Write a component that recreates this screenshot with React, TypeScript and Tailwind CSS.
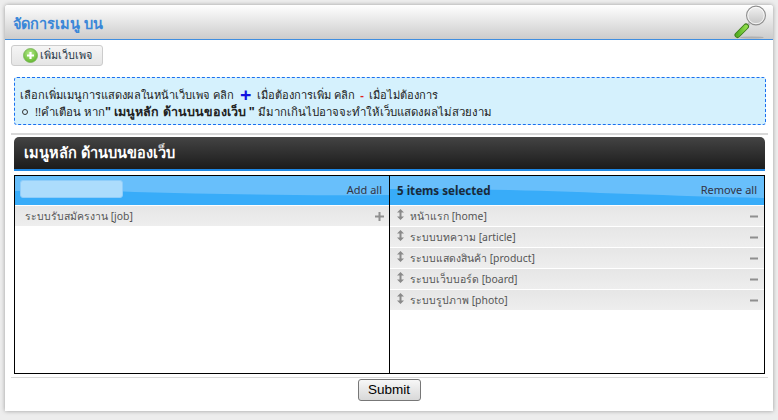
function PlusIcon() {
  return (
    <svg width="15" height="15" viewBox="0 0 15 15" className="shrink-0">
      <defs>
        <radialGradient id="pg" cx="45%" cy="35%" r="70%">
          <stop offset="0%" stopColor="#b5ea8c" />
          <stop offset="100%" stopColor="#5cb327" />
        </radialGradient>
      </defs>
      <circle cx="7.5" cy="7.5" r="7" fill="url(#pg)" stroke="#79b25a" strokeWidth="0.8" />
      <path d="M7.5 4v7M4 7.500h7" stroke="#fff" strokeWidth="2.2" />
    </svg>
  );
}

function Magnifier() {
  return (
    <svg width="34" height="34" viewBox="0 0 34 34">
      <defs>
        <linearGradient id="mg" x1="0" y1="0" x2="0" y2="1">
          <stop offset="0%" stopColor="#f2f2f2" />
          <stop offset="100%" stopColor="#c4c4c4" />
        </linearGradient>
        <linearGradient id="hg" x1="0" y1="0" x2="1" y2="0">
          <stop offset="0%" stopColor="#55b024" />
          <stop offset="100%" stopColor="#8fdc4a" />
        </linearGradient>
      </defs>
      <ellipse cx="18" cy="32.500" rx="12" ry="1" fill="#8f8f8f" opacity="0.5" />
      <path d="M15.500 18.500l-3 3" stroke="#b5b5b5" strokeWidth="2.500" />
      <path d="M3.500 30 12 21.500" stroke="#3d7d1a" strokeWidth="6" strokeLinecap="round" />
      <path d="M3.500 30 12 21.500" stroke="url(#hg)" strokeWidth="4" strokeLinecap="round" />
      <circle cx="22" cy="10.500" r="9.400" fill="url(#mg)" stroke="#8f8f8f" strokeWidth="1.200" />
      <circle cx="22" cy="10.500" r="8.200" fill="none" stroke="#fff" strokeWidth="1" opacity="0.8" />
    </svg>
  );
}

function Row({ label, icon, handle }: { label: string; icon: "+" | "-"; handle?: boolean }) {
  return (
    <div className="h-[21px] bg-gradient-to-b from-[#e6e6e6] to-[#eeeeee] flex items-center pr-[5px] text-[10.4px] text-[#555555] border-b border-white">
      {handle ? (
        <svg width="7" height="11" viewBox="0 0 7 11" className="ml-[7px] mr-[6px] mb-[3px] shrink-0">
          <path d="M3.500 0 7 3.500H0zM3.500 11 0 7.500h7z" fill="#8a8a8a" />
          <rect x="2.500" y="3" width="2" height="5" fill="#8a8a8a" />
        </svg>
      ) : (
        <span className="w-[10px] shrink-0" />
      )}
      <span className="flex-1 truncate pt-[1px]">{label}</span>
      <svg width="9" height="9" viewBox="0 0 9 9" className="shrink-0">
        {icon === "+" ? <path d="M4.500 0v9M0 4.500h9" stroke="#8f8f8f" strokeWidth="2" /> : <path d="M0 4.500h8" stroke="#8f8f8f" strokeWidth="2" />}
      </svg>
    </div>
  );
}

function Swoosh({ d }: { d: string }) {
  return (
    <svg viewBox="0 0 375 29" preserveAspectRatio="none" className="absolute inset-0 w-full h-full">
      <path d={d} fill="#68bffb" />
    </svg>
  );
}

export default function App() {
  const selected = ["หน้าแรก [home]", "ระบบบทความ [article]", "ระบบแสดงสินค้า [product]", "ระบบเว็บบอร์ด [board]", "ระบบรูปภาพ [photo]"];
  return (
    <div className="w-[778px] h-[420px] overflow-hidden bg-[#ededed] pt-[5px] pl-[5px] font-['Tahoma','Noto_Sans','DejaVu_Sans',sans-serif] text-[12px] text-[#222222]">
      <div className="w-[768px] h-[406px] bg-white rounded-t-[3px] shadow-[0_0_4px_rgba(0,0,0,0.35)] flex flex-col">
        <div className="h-[35px] shrink-0 bg-gradient-to-b from-white to-[#cccccc] border-b border-[#3f8ee0] flex items-center justify-between pl-[8px] pr-[5px] rounded-t-[3px]">
          <span className="text-[14.5px] font-bold text-[#3a87d8] pt-[4px]">จัดการเมนู บน</span>
          <Magnifier />
        </div>
        <div className="pl-[6px] pt-[5px]">
          <button className="w-[92px] h-[21px] bg-gradient-to-b from-[#f5f5f5] to-[#e5e5e5] border border-[#cccccc] rounded-[3px] flex items-center pl-[11px] gap-[2px] text-[10.8px] text-[#223344]">
            <PlusIcon />
            <span>เพิ่มเว็บเพจ</span>
          </button>
        </div>
        <div className="ml-[9px] mt-[11px] h-[48px] bg-[#d5f1fd] border border-dashed border-[#1a6ff0] rounded-[3px] px-[5px] pt-[8px] leading-[17px] text-[#222222] w-[752px]">
          <div className="flex items-center text-[11.1px]">
            <span>เลือกเพิ่มเมนูการแสดงผลในหน้าเว็บเพจ คลิก</span>
            <span className="ml-[6px] mr-[6px] text-[#1212e0] text-[20px] leading-[17px] font-bold">+</span>
            <span>เมื่อต้องการเพิ่ม คลิก</span>
            <span className="mx-[5px] text-[#e02020] font-bold">-</span>
            <span>เมื่อไม่ต้องการ</span>
          </div>
          <div className="flex items-center text-[11.4px]">
            <span className="w-[6px] h-[6px] rounded-full border border-[#333333] ml-[2px] mr-[7px]" />
            <span>!!คำเตือน หาก<b className="text-[12.5px]">" เมนูหลัก ด้านบนของเว็บ "</b> มีมากเกินไปอาจจะทำให้เว็บแสดงผลไม่สวยงาม</span>
          </div>
        </div>
        <div className="ml-[6px] mt-[8px] h-[2px] bg-[#d8d8d8] w-[757px]" />
        <div className="ml-[9px] mt-[2px] w-[751px] h-[34px] bg-gradient-to-b from-[#444444] to-[#1c1c1c] border-b-[2px] border-[#1e88e5] rounded-t-[5px] flex items-center pl-[10px] text-[14.5px] font-bold text-white">
          เมนูหลัก ด้านบนของเว็บ
        </div>
        <div className="ml-[9px] mt-[4px] w-[751px] h-[199px] border border-black grid grid-cols-[375px_1fr]">
          <div className="border-r border-black">
            <div className="relative h-[30px] bg-[#38acf9] border-b border-white flex items-center justify-end pr-[7px] text-[11px] text-[#333344]">
              <Swoosh d="M0 0H375V19C280 20 200 18 120 16C70 14 30 14 0 15Z" />
              <div className="absolute left-[5px] top-[4px] w-[103px] h-[18px] bg-[#acdcfc] border border-[#8fcdfa] rounded-[3px]" />
              <span className="relative">Add all</span>
            </div>
            <Row label="ระบบรับสมัครงาน [job]" icon="+" />
          </div>
          <div>
            <div className="relative h-[30px] bg-[#38acf9] border-b border-white flex items-center justify-between px-[7px] text-[11px] text-[#333344]">
              <Swoosh d="M0 0H375V22C280 20 200 16 120 14C70 13 30 13 0 13Z" />
              <b className="relative text-[#1a2a3a] text-[11.6px]">5 items selected</b>
              <span className="relative">Remove all</span>
            </div>
            {selected.map((s) => (
              <Row key={s} label={s} icon="-" handle />
            ))}
          </div>
        </div>
        <div className="ml-[6px] mt-[3px] h-[1px] w-[757px] bg-[#d8d8d8]" />
        <div className="flex justify-center pt-[1px]">
          <button className="w-[63px] h-[22px] border border-[#777777] rounded-[3px] bg-gradient-to-b from-[#f7f7f7] to-[#d8d8d8] font-['Liberation_Sans',sans-serif] text-[13.5px] text-black">
            Submit
          </button>
        </div>
      </div>
    </div>
  );
}
